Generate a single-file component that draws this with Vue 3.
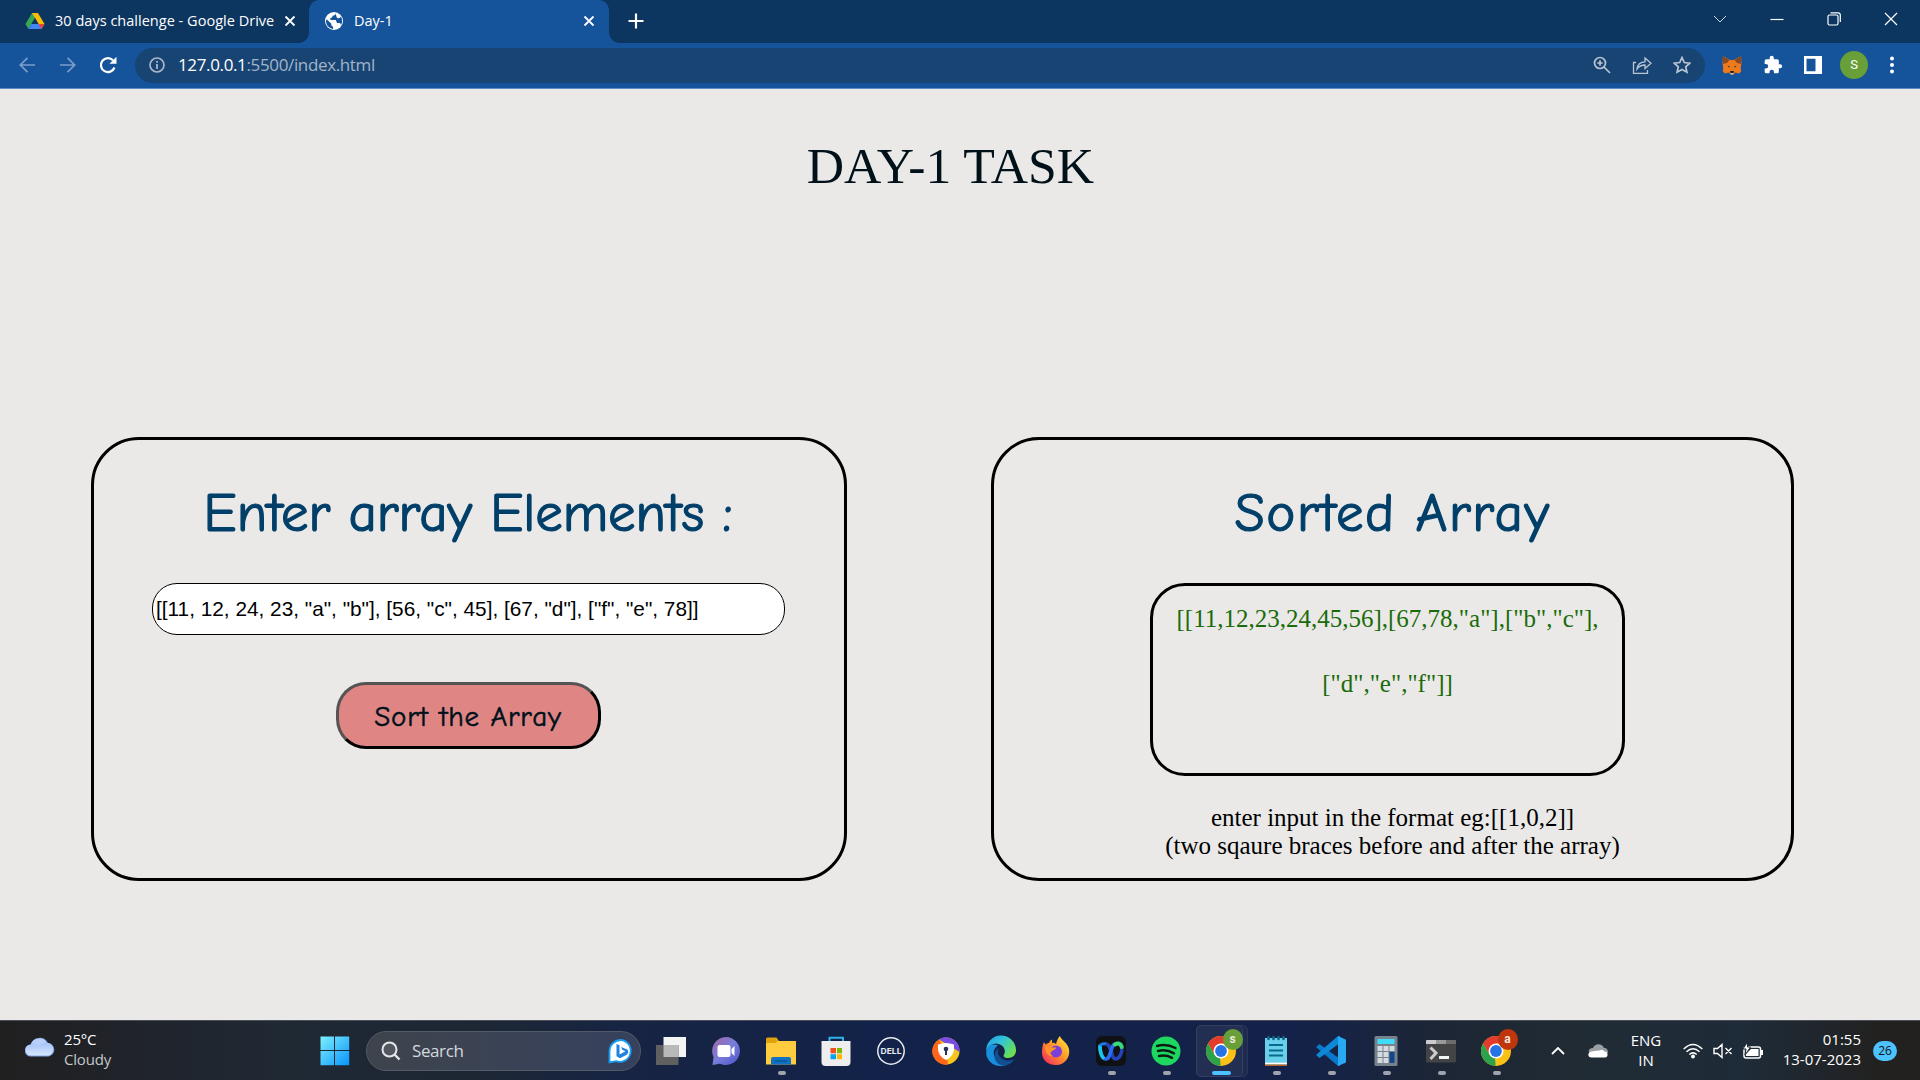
<script setup>
import { ref } from 'vue'

const raw = ref('[[11, 12, 24, 23, "a", "b"], [56, "c", 45], [67, "d"], ["f", "e", 78]]')
const resultLines = ['[[11,12,23,24,45,56],[67,78,"a"],["b","c"],', '["d","e","f"]]']
const apps = [
  { id: 'views' }, { id: 'chat' }, { id: 'files', open: true }, { id: 'store' }, { id: 'dell' },
  { id: 'shield' }, { id: 'edge' }, { id: 'firefox' }, { id: 'webex', open: true },
  { id: 'spotify', open: true }, { id: 'chrome', open: true, active: true, badge: 's', tint: '#689f38' },
  { id: 'notepad', open: true }, { id: 'code', open: true }, { id: 'calc', open: true },
  { id: 'terminal', open: true }, { id: 'chrome', open: true, badge: 'a', tint: '#bf360c' },
]
</script>

<template>
  <div class="screen">
    <header class="tabs">
      <div class="tab first">
        <svg class="fav" width="20" height="20" viewBox="0 0 20 20">
          <path d="M7 2h6l-6.600 11L3.400 18 .5 13z" fill="#34a853" />
          <path d="M7 2h6l6.500 11h-6z" fill="#fbbc04" />
          <path d="M6.400 13h13.100l-3 5H3.400z" fill="#4285f4" />
          <path d="M13.500 13h6l-3 5z" fill="#ea4335" />
          <path d="M10 7l3.400 6H6.600z" fill="#0c3560" />
        </svg>
        <span class="label drive">30 days challenge - Google Drive</span>
        <svg class="x" width="12" height="12" viewBox="0 0 12 12"><path d="M1.500 1.500l9 9m0-9l-9 9" /></svg>
      </div>
      <div class="tab current">
        <svg class="fav" width="20" height="20" viewBox="0 0 20 20">
          <circle cx="10" cy="10" r="9" fill="#fff" />
          <path d="M2.600 8.200l4.700 4.500v1.500l1.800 1.700v2C5 17.400 2 14 2 10zM11.500 2.600c-.2 2-1.200 2-2.800 2.200-.4 1.700-.8 2-2.300 2.200v2h5.400l1.200 3h2c1.500 0 2 .8 1.800 2.500 1.800-2.700 1.800-6.500 0-9-.5 1.500-1.800 2-3.300 1.400-1.500-.6-.9-2.300-2-4.300z" fill="#15539a" />
        </svg>
        <span class="label day">Day-1</span>
        <svg class="x" width="12" height="12" viewBox="0 0 12 12"><path d="M1.500 1.500l9 9m0-9l-9 9" /></svg>
      </div>
      <svg class="plus" width="16" height="16" viewBox="0 0 16 16"><path d="M8 .5v15M.5 8h15" stroke="#fff" stroke-width="2.200" /></svg>
      <div class="controls">
        <svg class="thin" width="14" height="8" viewBox="0 0 14 8"><path d="M1 1l6 6 6-6" /></svg>
        <svg width="14" height="14" viewBox="0 0 14 14"><path d="M.5 7.500h13" /></svg>
        <svg width="14" height="14" viewBox="0 0 14 14"><rect x="1" y="3" width="10" height="10" rx="1.500" /><path d="M3.500.8H11c1.500 0 2.300.8 2.300 2.300v7" /></svg>
        <svg width="14" height="14" viewBox="0 0 14 14"><path d="M1 1l12 12M13 1L1 13" /></svg>
      </div>
    </header>

    <nav class="toolbar">
      <svg class="nav" width="16" height="16" viewBox="0 0 16 16"><path d="M16 8H1.500M8.500.8L1.300 8l7.200 7.200" fill="none" stroke="#7b9fcb" stroke-width="1.700" /></svg>
      <svg class="nav" width="16" height="16" viewBox="0 0 16 16"><path d="M0 8h14.500M7.500.8L14.700 8l-7.200 7.200" fill="none" stroke="#7b9fcb" stroke-width="1.700" /></svg>
      <svg class="nav" width="18" height="18" viewBox="0 0 18 18"><path d="M15.500 11.500A7 7 0 1 1 14 4.200" fill="none" stroke="#fff" stroke-width="2.200" /><path d="M17.500.800v7h-7z" fill="#fff" /></svg>
      <div class="omnibox">
        <svg class="info" width="16" height="16" viewBox="0 0 16 16"><circle cx="8" cy="8" r="7" fill="none" stroke="#a9b6c7" stroke-width="1.700" /><path d="M8 7v5M8 4v1.700" stroke="#a9b6c7" stroke-width="1.800" /></svg>
        <span class="url"><b>127.0.0.1</b>:5500/index.html</span>
        <div class="actions">
          <svg width="18" height="18" viewBox="0 0 18 18"><circle cx="7" cy="7" r="5.500" /><path d="M11 11l6 6M7 4.300v5.400M4.300 7h5.400" /></svg>
          <svg width="20" height="20" viewBox="0 0 20 20"><path d="M4 7.500H1.500V18.300h14V15M5 14c.5-4.500 3-7 8-7.200V3l6 5.300-6 5.300V10c-4 0-6 1.200-8 4z" stroke-width="1.300" /></svg>
          <svg width="18" height="18" viewBox="0 0 18 18"><path d="M9 1.500l2.300 5 5.500.6-4.100 3.700 1.200 5.400L9 13.500l-4.900 2.700 1.200-5.400L1.200 7.100l5.500-.6z" /></svg>
        </div>
      </div>
      <div class="extensions">
        <svg width="20" height="20" viewBox="0 0 20 20">
          <path d="M1 1l7 4h4l7-4 .5 7-.8 5 .6 3-2 2.500-4-1-2 2H8.700l-2-2-4 1-2-2.500.6-3-.8-5z" fill="#ee7a1b" />
          <path d="M1 1l6.500 4L5 8 .8 9zM19 1l-6.500 4L15 8l4.200 1z" fill="#8a4a21" /><path d="M8 16h4l-.6 2.500H8.600z" fill="#222" /><path d="M8.500 18.200h3v1.200h-3z" fill="#ddd" />
          <path d="M5.500 10.500l2.500 1-1.200 1zM14.500 10.500l-2.500 1 1.200 1z" fill="#233447" />
        </svg>
        <svg width="20" height="20" viewBox="0 0 24 24"><path fill="#fff" d="M20.500 11H19V7a2 2 0 0 0-2-2h-4V3.500a2.500 2.500 0 0 0-5 0V5H4a2 2 0 0 0-2 2v3.800h1.500a2.700 2.700 0 0 1 0 5.400H2V20a2 2 0 0 0 2 2h3.800v-1.500a2.700 2.700 0 0 1 5.400 0V22H17a2 2 0 0 0 2-2v-4h1.500a2.500 2.500 0 0 0 0-5z" /></svg>
        <svg width="18" height="18" viewBox="0 0 18 18"><path fill="#fff" fill-rule="evenodd" d="M0 0h18v18H0zM2.500 2.800v12.400h9V2.800z" /></svg>
        <span class="avatar">S</span>
        <svg width="6" height="18" viewBox="0 0 6 18"><g fill="#fff"><circle cx="3" cy="2.500" r="2" /><circle cx="3" cy="9" r="2" /><circle cx="3" cy="15.500" r="2" /></g></svg>
      </div>
    </nav>

    <main class="page">
      <h1>DAY-1 TASK</h1>
      <div class="cards">
        <section class="card entry">
          <h2 class="enter">Enter array Elements :</h2>
          <input v-model="raw" type="text" />
          <button>Sort the Array</button>
        </section>
        <section class="card sorted">
          <h2 class="heading">Sorted Array</h2>
          <div class="result"><div v-for="line in resultLines" :key="line">{{ line }}</div></div>
          <p class="hint">enter input in the format eg:[[1,0,2]]<br />(two sqaure braces before and after the array)</p>
        </section>
      </div>
    </main>

    <footer class="taskbar">
      <svg class="weather" width="30" height="20" viewBox="0 0 30 20">
        <defs><linearGradient id="sky" x1="0" y1="0" x2="0" y2="1"><stop offset="0" stop-color="#a4c4f8" /><stop offset="1" stop-color="#d6e5fb" /></linearGradient></defs>
        <path d="M6 19.500a6 6 0 0 1-.5-12A9.500 9.500 0 0 1 23 6a6.800 6.800 0 0 1 .5 13.500z" fill="#7ea6ea" />
        <path d="M6 18.500a5.500 5.500 0 0 1 0-11 6 6 0 0 1 8 1c1.500-2 4-3 6-2.500a6.200 6.200 0 0 1 3.500 12.500z" fill="url(#sky)" />
        <path d="M6 7a9 9 0 0 1 16-1c-3-.6-6 .5-8 3-2-2-5-2.600-8-2z" fill="#b9d0fa" />
      </svg>
      <div class="forecast"><span>25°C</span><span class="dim">Cloudy</span></div>
      <svg class="start" width="30" height="30" viewBox="0 0 30 30">
        <defs><linearGradient id="win" x1="0" y1="0" x2="1" y2="1"><stop offset="0" stop-color="#7df0ff" /><stop offset="1" stop-color="#0a93fb" /></linearGradient></defs>
        <path fill="url(#win)" d="M.5.500H14V14H.5zM15 .5h14.200V14H15zM.5 15H14v14.200H.5zM15 15h14.200v14.200H15z" />
      </svg>
      <div class="search">
        <svg width="20" height="20" viewBox="0 0 20 20"><circle cx="8.500" cy="8.500" r="7" fill="#51565f" stroke="#e4e6e8" stroke-width="2" /><path d="M13.500 13.500l5 5" stroke="#e4e6e8" stroke-width="2.400" /></svg>
        <span>Search</span>
        <svg class="bing" width="26" height="26" viewBox="0 0 26 26">
          <path d="M13.500 2A11 11 0 1 1 8 23.200L1.500 24.500V13A11.500 11.500 0 0 1 13.500 2z" fill="#fff" stroke="#179df2" stroke-width="1.800" />
          <path d="M8.500 6l3 1.200v9.300l6-3.200-3.300-1.500-1-2.800 6 2.500c1.800 1.500 1.200 4-.5 5.200L12 20.300l-3.500-2z" fill="#2181e0" />
        </svg>
      </div>
      <div class="apps">
        <div v-for="(app, i) in apps" :key="i" class="app" :class="{ active: app.active }">
          <svg width="32" height="32" viewBox="0 0 32 32">
            <template v-if="app.id === 'views'"><path d="M8.500 2H31v20H8.500z" fill="#f4f4f4" /><path d="M1 10h22.500v20H1z" fill="#606060" /><path d="M8.500 10h15v12h-15z" fill="#b9b9b9" /></template>
            <template v-else-if="app.id === 'chat'">
              <defs><linearGradient id="chat" x1="0" y1="0" x2="1" y2="1"><stop offset="0" stop-color="#a565a0" /><stop offset=".5" stop-color="#777ddc" /><stop offset="1" stop-color="#4e53c6" /></linearGradient></defs>
              <path d="M16 2a14 14 0 1 1-6 26.700L2.500 30l1-8A14 14 0 0 1 16 2z" fill="url(#chat)" /><rect x="7.500" y="10" width="13" height="12" rx="2" fill="#fff" /><path d="M21.500 14l3-3v10l-3-3z" fill="#fff" />
            </template>
            <template v-else-if="app.id === 'files'"><path d="M1 4q0-1.500 1.500-1.500h9L14 6h17v8H1z" fill="#dfa20b" /><path d="M1 8h9l3-2h18v23.500H1z" fill="#ffcb3f" /><path d="M6 29.500V24q0-2 2-2h16q2 0 2 2v5.500z" fill="#0f72c2" /><path d="M10 26h12" stroke="#064f8f" stroke-width="1.200" /></template>
            <template v-else-if="app.id === 'store'"><path d="M9.500 7V2.700h13.500V7" fill="none" stroke="#2ab4ea" stroke-width="2" /><path d="M1.500 6h29v21q0 4-4 4h-21q-4 0-4-4z" fill="#eee" /><path d="M9.500 6h1V5h12v1h1" fill="none" stroke="#2ab4ea" stroke-width="0" /><path d="M10.500 13H16v5.300h-5.500z" fill="#f25022" /><path d="M17 13h5v5.300h-5z" fill="#7fba00" /><path d="M10.500 19.200H16v5h-5.500z" fill="#00a4ef" /><path d="M17 19.200h5v5h-5z" fill="#ffb900" /></template>
            <template v-else-if="app.id === 'dell'"><circle cx="16" cy="16" r="13.200" fill="none" stroke="#e8eaf0" stroke-width="1.500" /><text x="16" y="19.300" class="logo" text-anchor="middle" textLength="21" lengthAdjust="spacingAndGlyphs">DELL</text></template>
            <template v-else-if="app.id === 'shield'"><circle cx="16" cy="16" r="13.500" fill="#f7c51b" /><path d="M18 29.500A13.500 13.500 0 0 1 9 4.500L16 16z" fill="#ff641b" /><path d="M9 4.500A13.500 13.500 0 0 1 29.500 17l-8-5z" fill="#7b4be6" /><path d="M16 8q4 0 8 1.500V14q0 7-8 11-8-4-8-11V9.500Q12 8 16 8z" fill="#fff" /><circle cx="16" cy="14" r="2.300" fill="#263452" /><path d="M15 14h2v6h-2z" fill="#263452" /></template>
            <template v-else-if="app.id === 'edge'">
              <defs>
                <linearGradient id="edge" x1="0" y1="0" x2="1" y2=".6"><stop offset="0" stop-color="#249de6" /><stop offset=".5" stop-color="#32c4d8" /><stop offset="1" stop-color="#6cdf50" /></linearGradient>
              </defs>
              <path d="M1.200 17C2 10 8 8 13 10.500c-3.500 2-5 6-4 9.500 1.500 5.500 8 8.500 12 7.500l2 1.500C12 35 .5 27 1.200 17z" fill="#168fdd" />
              <path d="M1.200 16A14.900 14.900 0 0 1 31 15c.2 5-3.500 8-8 8-3.500 0-5.200-1.500-4-3.500 1.600-2.500 1-6-1.500-8.500C12 6 3.500 8.500 1.200 16z" fill="url(#edge)" />
              <path d="M13.500 13c-5.500 4-5 12-.5 15.500 5 4 13 2 16.500-4.500-7 4-16 0-16.500-6.500 0-2 .2-3 .5-4.500z" fill="#124f91" />
            </template>
            <template v-else-if="app.id === 'firefox'">
              <defs><linearGradient id="fox" x1="1" y1="0" x2="0" y2="1"><stop offset="0" stop-color="#fff044" /><stop offset=".45" stop-color="#ff9a26" /><stop offset="1" stop-color="#f51b68" /></linearGradient></defs>
              <path d="M4 7l1.500 2.500C7 8.500 8 8 9 8c.5-2 2-3 3-3.500V8c2-.5 3 .5 4 1 1-4 2.500-6.500 4-8 1 4 7 6 9 13 1.500 8-4 16-13 16S1.500 24 2 17c.2-4 .5-7 2-10z" fill="url(#fox)" /><circle cx="16" cy="16.500" r="6" fill="#7b3fdc" /><path d="M5.500 11c3-1 5 .5 6.500 1.500h4c0 2-3 2.500-4 4-2 0-2 3 1 4.500-5 1-8.500-4-7.500-10z" fill="#ff9326" />
            </template>
            <template v-else-if="app.id === 'webex'"><rect x="1" y="1" width="30" height="30" rx="6" fill="#101114" /><path d="M20 9.500c4-2.500 7-.5 7 3.500 0 6-3 11-6.500 11-4.500 0-4-15-9.500-15" fill="none" stroke="#2344b8" stroke-width="3.600" /><path d="M5 11c0 7 2 13 6 13 5 0 4.500-15 9.500-15" fill="none" stroke="#2a6cf5" stroke-width="3.600" stroke-linecap="round" /><path d="M5 11c0 5 1 9 3 11.500" fill="none" stroke="#17c7e7" stroke-width="3.600" stroke-linecap="round" /><path d="M5 11c1-2 4-2.500 6-2" fill="none" stroke="#1d78e8" stroke-width="3" /><path d="M20 9.500c3.500-2 6-.5 6.700 2.500" fill="none" stroke="#37dc75" stroke-width="4" stroke-linecap="round" /></template>
            <template v-else-if="app.id === 'spotify'"><circle cx="16" cy="16" r="14.500" fill="#1ed760" /><path d="M7 11q9.500-2.500 18.500 2M8 16q8.500-2 16 2.300M9 21q7-1.500 13 1.800" fill="none" stroke="#0a1d13" stroke-width="2.500" stroke-linecap="round" /></template>
            <template v-else-if="app.id === 'chrome'"><circle cx="16" cy="16" r="15" fill="#fbc116" /><path d="M3 8.500A15 15 0 0 1 29 8.500H16L9.500 19.800z" fill="#e33b2e" /><path d="M3 8.500l6.500 11.300L16 23.500l-.5 7.500A15 15 0 0 1 3 8.500z" fill="#2ba24c" /><path d="M22.500 19.800L16 31l-1-7.500z" fill="#fbc116" /><circle cx="16" cy="16" r="7.500" fill="#fff" /><circle cx="16" cy="16" r="5.900" fill="#2673e6" /></template>
            <template v-else-if="app.id === 'notepad'"><path d="M5 3h22v28H5z" fill="#4cb9d8" /><path d="M5 3h22v24H5z" fill="#68d0ea" /><path d="M5 27.500h22v2H5z" fill="#fff" /><path d="M5 29.500h22v1.500H5z" fill="#b36328" /><path d="M9 10h14M9 15.500h14M9 20.500h14" stroke="#08688f" stroke-width="1.800" /><path d="M8.500 2v2M13.500 2v2M18.500 2v2M23.500 2v2" stroke="#0d6587" stroke-width="2.600" stroke-linecap="round" /></template>
            <template v-else-if="app.id === 'code'"><path d="M1.500 11.500L4.500 9 25 24v6.500L23 31 1.500 12.500z" fill="#0878c9" /><path d="M1.500 20.500l3 2.500L25 8V1.500L23 1 1.500 19.500z" fill="#0d89d8" /><path d="M23 1l8 3.700v22.800L23 31z" fill="#29a9f2" /></template>
            <template v-else-if="app.id === 'calc'"><rect x="4.500" y="1" width="23" height="30" rx="1.500" fill="#77828c" /><path d="M7.500 4h17v5h-17z" fill="#3fdcf9" /><path d="M7.500 11h5v5h-5zM13.500 11h5v5h-5zM19.500 11h5v5h-5zM7.500 17h5v5h-5zM13.500 17h5v5h-5zM7.500 23h5v5h-5zM13.500 23h5v5h-5z" fill="#d5dae0" /><path d="M19.500 17h5v11h-5z" fill="#124887" /></template>
            <template v-else><rect x="1" y="5" width="30" height="22.500" rx="1.500" fill="#434446" /><path d="M1 9V6q0-1 1-1h9v4z" fill="#ccc" /><path d="M11 5h10v4H11z" fill="#999" /><path d="M21 5h9q1 0 1 1v3H21z" fill="#6c6c6c" /><path d="M5.500 12.500L11 18l-5.500 6" fill="none" stroke="#ccc" stroke-width="3" /><path d="M14 21h10v3H14z" fill="#f3f3f3" /></template>
          </svg>
          <span v-if="app.badge" class="profile" :style="{ background: app.tint }">{{ app.badge }}</span>
          <i v-if="app.open" class="mark"></i>
        </div>
      </div>
      <div class="tray">
        <svg class="up" width="14" height="8" viewBox="0 0 14 8"><path d="M1 7l6-6 6 6" fill="none" stroke="#fff" stroke-width="1.800" /></svg>
        <svg class="drive-cloud" width="20" height="14" viewBox="0 0 20 14"><path d="M4 10C-1 9 0 4 5 4c2-5 9-5 11 0 3 0 4 2 4 5z" fill="#9a9fa4" /><path d="M3.500 13.500c-4 0-4.500-5 0-6q5-1 8-1c3-1 4 0 5 1 4 0 4 6 .5 6z" fill="#fff" /></svg>
        <div class="lang"><span>ENG</span><span>IN</span></div>
        <svg class="wifi" width="20" height="16" viewBox="0 0 20 16"><g fill="none" stroke="#fff" stroke-width="1.500"><path d="M.7 6q9.300-9 18.600 0M3.500 8.800q6.500-6 13 0M6.300 11.500q3.700-3.200 7.400 0" /></g><circle cx="10" cy="13.500" r="2" fill="#fff" /></svg>
        <svg class="mute" width="20" height="16" viewBox="0 0 20 16"><path d="M1 5.500h3.500L9 1.500v13l-4.500-4H1zM12.500 5l6 6m0-6l-6 6" fill="none" stroke="#fff" stroke-width="1.400" /></svg>
        <svg class="battery" width="20" height="18" viewBox="0 0 20 18"><rect x="1" y="5" width="16.500" height="11" rx="2" fill="none" stroke="#fff" stroke-width="1.500" /><path d="M3 14v-2l5-5h7.500v7z" fill="#fff" /><path d="M17.500 8H20v5h-2.500z" fill="#fff" /><path d="M4.500 0L0 7h3l-1 6 5.500-8H4.500z" fill="#fff" stroke="#202b35" /></svg>
        <div class="clock"><span class="time">01:55</span><span class="date">13-07-2023</span></div>
        <span class="count">26</span>
      </div>
    </footer>
  </div>
</template>

<style>
body { margin: 0; overflow: hidden; }
</style>

<style scoped>
* { box-sizing: border-box; }
.screen { width: 1920px; height: 1080px; display: flex; flex-direction: column; overflow: hidden; background: #eae9e7; font-family: "Segoe UI", "Open Sans", "Noto Sans", sans-serif; color: #fff; }
svg { display: block; flex: none; }
.tabs { height: 43px; flex: none; display: flex; background: #0c3560; }
.tab { position: relative; height: 43px; display: flex; align-items: center; padding-bottom: 1px; }
.first { width: 309px; padding-left: 25px; }
.current { width: 300px; padding-left: 15px; background: #15539a; border-radius: 10px 10px 0 0; }
.current::before, .current::after { content: ""; position: absolute; bottom: 0; width: 10px; height: 10px; }
.current::before { left: -10px; background: radial-gradient(circle at 0 0, transparent 9.5px, #15539a 10px); }
.current::after { right: -10px; background: radial-gradient(circle at 100% 0, transparent 9.5px, #15539a 10px); }
.label { margin-left: 10px; font-size: 14.500px; line-height: 20px; white-space: nowrap; }
.drive { width: 219px; letter-spacing: 0.020px; }
.first .x { margin-left: 10px; }
.current .x { margin-left: auto; margin-right: 14px; }
.x path { stroke: #fff; stroke-width: 1.800; }
.plus { margin: 13px 0 0 19px; }
.controls { margin-left: auto; display: flex; align-items: center; gap: 43px; padding: 0 22px 6px 0; }
.controls svg { fill: none; stroke: #fff; stroke-width: 1.200; }
.controls .thin { stroke-width: 1; stroke: #c9d4e0; }
.toolbar { height: 46px; flex: none; display: flex; align-items: center; background: #15539a; border-bottom: 1px solid #5b8dc4; padding: 0 25px 1px 19px; }
.nav { margin-right: 25px; }
.nav:nth-child(2) { margin-right: 23px; }
.nav:nth-child(3) { margin-right: 18px; }
.omnibox { width: 1570px; height: 35px; border-radius: 18px; background: #184473; display: flex; align-items: center; padding: 0 14px; }
.url { margin-left: 13px; font-size: 17px; line-height: 24px; letter-spacing: -0.360px; color: #a3b4c9; white-space: nowrap; }
.url b { font-weight: 400; color: #fff; }
.actions { margin-left: auto; display: flex; align-items: center; gap: 21px; }
.actions svg { fill: none; stroke: #bac5d3; stroke-width: 1.700; }
.extensions { margin-left: auto; display: flex; align-items: center; width: 173px; }
.extensions svg:nth-child(2) { margin-left: 21px; }
.extensions svg:nth-child(3) { margin-left: 21px; }
.extensions svg:last-child { margin-left: auto; }
.avatar { width: 28px; height: 28px; border-radius: 50%; background: #689f38; font: 13px/28px Roboto, sans-serif; text-align: center; margin-left: 18px; }
.page { height: 931px; flex: none; font-family: "Times New Roman", "Liberation Serif", serif; color: #000; }
h1 { margin: 47px 0 0; padding-right: 19px; font-size: 51.700px; line-height: 60px; font-weight: 400; text-align: center; color: #00111a; }
.cards { display: flex; gap: 144px; margin: 241px 0 0 91px; }
.card { height: 444px; border: 3px solid #000; border-radius: 48px; display: flex; flex-direction: column; align-items: center; }
.entry { width: 756px; padding-right: 2px; }
.sorted { width: 803px; }
h2 { margin: 38px 0 0; height: 69px; font: 400 55px/70px "Comic Sans MS", "Comic Neue", "Noto Sans", sans-serif; color: #003f69; white-space: nowrap; -webkit-text-stroke: 1.200px #003f69; }
.enter { letter-spacing: -0.100px; }
.heading { letter-spacing: 1.500px; }
input { margin-top: 36px; width: 633px; height: 52px; border: 1px solid #000; border-radius: 25px; padding: 0 3.500px; background: #fff; color: #000; font: 20.800px Arial, "Liberation Sans", sans-serif; outline: none; }
button { margin-top: 47px; width: 265px; height: 67px; border: 3px outset #000; border-radius: 30px; padding: 1px 0 0; background: #df8685; color: #00111a; font: 29px "Comic Sans MS", "Comic Neue", "Noto Sans", sans-serif; letter-spacing: 0.800px; white-space: nowrap; -webkit-text-stroke: 0.500px #00111a; }
.result { margin: 36px 10px 0 0; width: 475px; height: 193px; border: 3px solid #000; border-radius: 35px; color: #1a6b0a; font-size: 25px; line-height: 65px; text-align: center; white-space: nowrap; }
.hint { margin: 28px 0 0; font-size: 25px; line-height: 28px; text-align: center; }
.taskbar { height: 60px; flex: none; display: flex; align-items: center; border-top: 1px solid #4a4f59; background: linear-gradient(90deg, #212020 0, #202125 3%, #1f2833 14%, #1d2734 25%, #172443 32%, #132248 45%, #142249 68%, #1d2635 75%, #202b34 82%, #1e2b38 91%, #222120 98%); font-size: 15px; }
.weather { margin: -7px 0 0 25px; }
.forecast, .lang, .clock { display: flex; flex-direction: column; line-height: 20px; font-size: 15px; padding-bottom: 4px; }
.lang { padding-bottom: 2px; }
.forecast { width: 60px; margin-left: 9px; letter-spacing: -0.200px; }
.dim { color: #c5c7ca; }
.start { margin-left: 196px; }
.search { margin-left: 16px; width: 275px; height: 40px; border: 1px solid #525967; border-radius: 20px; background: linear-gradient(90deg, #3e444c, #36415e); display: flex; align-items: center; padding: 0 6px 0 14px; font-size: 17px; letter-spacing: -0.400px; color: #d5d8dd; }
.search span { margin-left: 11px; }
.bing { margin-left: auto; }
.apps { display: flex; height: 59px; margin-left: 2.500px; }
.app { position: relative; width: 55px; display: flex; justify-content: center; align-items: center; }
.app > svg { position: relative; }
.active::before { content: ""; position: absolute; left: 2px; top: 4px; width: 50px; height: 50px; border: 1px solid #2b3659; border-radius: 5px; background: #1e2b50; }
.active::after { content: ""; position: absolute; left: 2px; top: 4px; width: 45px; height: 50px; border: 1px solid #343f61; border-radius: 5px; background: #222e52; }
.active > svg { z-index: 1; }
.mark { position: absolute; left: 24px; bottom: 5px; width: 8px; height: 4px; border-radius: 2px; background: #9fa3ad; z-index: 2; }
.active .mark { left: 18px; width: 19px; background: #4cc2ff; }
.profile { position: absolute; z-index: 3; right: 6px; top: 8px; width: 20px; height: 21px; border-radius: 50%; color: #f0e8dc; font: 700 12px/20px Roboto, sans-serif; text-align: center; }
.logo { font: 700 8px Inter, sans-serif; fill: #e8eaf0; }
.tray { margin-left: auto; display: flex; align-items: center; margin-right: 23px; }
.drive-cloud { margin-left: 23px; }
.lang { width: 40px; margin-left: 18px; align-items: center; }
.wifi { margin-left: 17px; }
.mute { margin-left: 10px; }
.battery { margin-left: 10px; }
.clock { width: 98px; align-items: flex-end; }
.count { margin-left: 12px; width: 24px; height: 20px; border-radius: 10px; background: #4cc2ff; color: #111; font-size: 12px; line-height: 20px; text-align: center; }
</style>
